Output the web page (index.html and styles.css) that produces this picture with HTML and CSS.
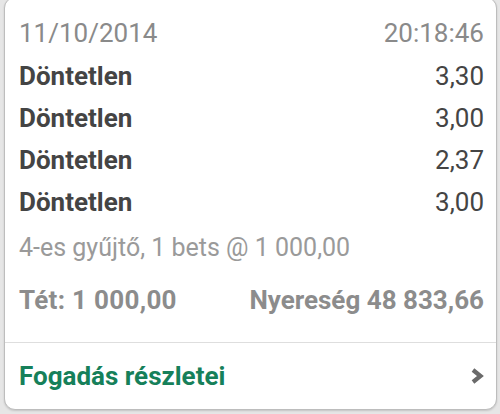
FILE: index.html
```html
<!DOCTYPE html>
<html lang="hu">

<head>
    <meta charset="UTF-8">
    <meta name="viewport" content="width=device-width, initial-scale=1.0">
    <title>Fogadás</title>
    <link rel="stylesheet" href="styles.css">
</head>

<body>
    <div class="card">
        <div class="card-body">
            <div class="row head">
                <span>11/10/2014</span>
                <span>20:18:46</span>
            </div>

            <div class="row pick">
                <span class="name">Döntetlen</span>
                <span>3,30</span>
            </div>
            <div class="row pick">
                <span class="name">Döntetlen</span>
                <span>3,00</span>
            </div>
            <div class="row pick">
                <span class="name">Döntetlen</span>
                <span>2,37</span>
            </div>
            <div class="row pick">
                <span class="name">Döntetlen</span>
                <span>3,00</span>
            </div>

            <div class="summary">4-es gyűjtő, 1 bets @ 1 000,00</div>

            <div class="row stake">
                <span>Tét: 1 000,00</span>
                <span>Nyereség 48 833,66</span>
            </div>
        </div>

        <a href="#" class="details">
            <span>Fogadás részletei</span>
            <svg width="16" height="18" viewBox="0 0 16 18">
                <path d="M4 3 L11.5 9 L4 15" fill="none" stroke="#6a6a6a" stroke-width="4.2" stroke-linejoin="miter"/>
            </svg>
        </a>
    </div>
</body>

</html>
```

FILE: styles.css
```css
body {
    font-family: Roboto, "Liberation Sans", sans-serif;
    margin: 0;
    padding: 0;
    background-color: #e6e6e6;
    height: 414px;
    overflow: hidden;
}

.card {
    margin: -3px 3px 0 4px;
    height: 413px;
    box-sizing: border-box;
    background: white;
    border: 1px solid #bdbdbd;
    border-radius: 11px;
    box-shadow: 0 1px 2px rgba(0, 0, 0, 0.15);
    display: flex;
    flex-direction: column;
}

.card-body {
    padding: 12px 12px 21px 14px;
    border-bottom: 1px solid #dedede;
}

.row {
    display: flex;
    justify-content: space-between;
    align-items: center;
}

.head {
    height: 45px;
    font-size: 26px;
    color: #8a8a8a;
}

.pick {
    height: 42px;
    font-size: 26px;
    color: #444;
}

.pick .name {
    font-weight: bold;
}

.summary {
    margin-top: 4px;
    line-height: 42px;
    font-size: 25px;
    color: #9a9a9a;
}

.stake {
    margin-top: 10px;
    height: 42px;
    font-size: 26px;
    font-weight: bold;
    color: #8c8c8c;
}

.stake span:first-child {
    letter-spacing: 0.3px;
}

.details {
    flex: 1;
    display: flex;
    justify-content: space-between;
    align-items: center;
    padding: 0 11px 0 14px;
    text-decoration: none;
    color: #16805a;
    font-size: 26px;
    font-weight: bold;
}
```
